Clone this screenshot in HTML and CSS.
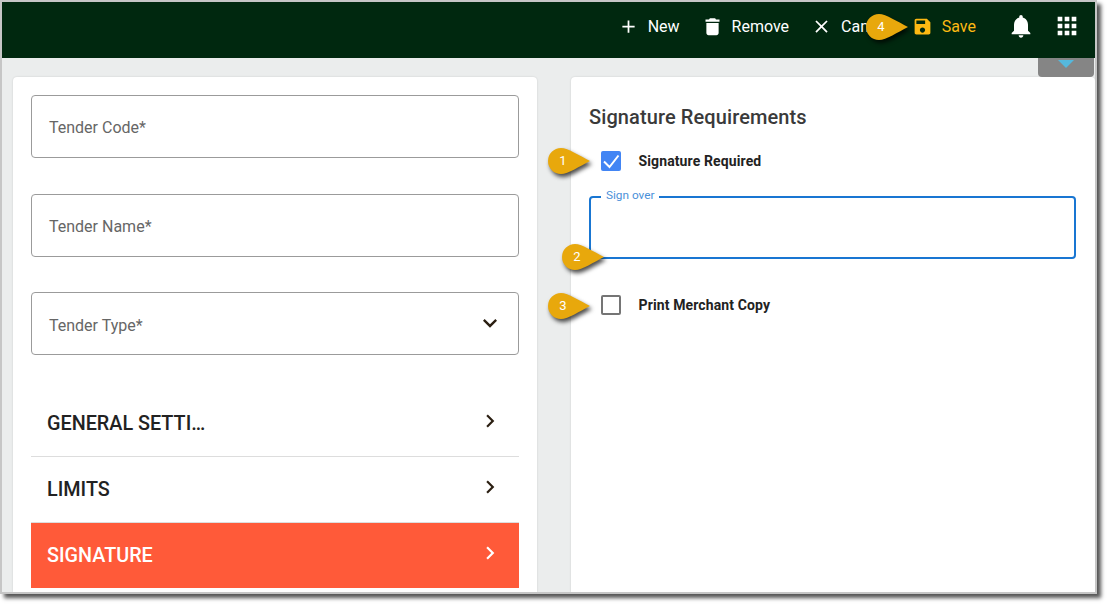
FILE: index.html
```html
<!DOCTYPE html>
<html lang="en">

<head>
    <meta charset="UTF-8">
    <title>Tender Signature Settings</title>
    <link rel="stylesheet" href="styles.css">
</head>

<body>
    <div class="window">
        <header class="topbar">
            <button class="tool">
                <svg class="icon" viewBox="0 0 24 24"><path d="M19 13h-6v6h-2v-6H5v-2h6V5h2v6h6v2z"/></svg>
                New
            </button>
            <button class="tool">
                <svg class="icon" viewBox="0 0 24 24"><path d="M9 2.500h6l1 1.500h4v2.500H4V4h4zM5 8h14v11.500c0 1.400-1.100 2.500-2.500 2.500h-9C6.100 22 5 20.900 5 19.500z"/></svg>
                Remove
            </button>
            <button class="tool">
                <svg class="icon" viewBox="0 0 24 24"><path d="M19 6.410L17.590 5 12 10.590 6.410 5 5 6.410 10.590 12 5 17.590 6.410 19 12 13.410 17.590 19 19 17.590 13.410 12z"/></svg>
                Cancel
            </button>
            <button class="tool tool-save">
                <svg class="icon" viewBox="0 0 24 24"><path d="M17 3H5c-1.110 0-2 .9-2 2v14c0 1.100.89 2 2 2h14c1.100 0 2-.9 2-2V7l-4-4zm-5 16c-1.660 0-3-1.340-3-3s1.340-3 3-3 3 1.340 3 3-1.340 3-3 3zm3-10H5V5h10v4z"/></svg>
                Save
            </button>
            <button class="tool">
                <svg class="icon icon-big" viewBox="0 0 24 24"><path d="M12 22c1.100 0 2-.9 2-2h-4c0 1.100.9 2 2 2zm6-6v-5c0-3.070-1.630-5.640-4.500-6.320V4c0-.83-.67-1.500-1.500-1.500s-1.500.67-1.500 1.500v.68C7.640 5.360 6 7.920 6 11v5l-2 2v1h16v-1l-2-2z"/></svg>
            </button>
            <button class="tool">
                <svg class="icon icon-big" viewBox="0 0 24 24"><path d="M4 8h4V4H4v4zm6 12h4v-4h-4v4zm-6 0h4v-4H4v4zm0-6h4v-4H4v4zm6 0h4v-4h-4v4zm6-10v4h4V4h-4zm-6 4h4V4h-4v4zm6 6h4v-4h-4v4zm0 6h4v-4h-4v4z"/></svg>
            </button>
        </header>

        <main class="content">
            <section class="panel">
                <div class="field">Tender Code*</div>
                <div class="field">Tender Name*</div>
                <div class="field field-select">
                    Tender Type*
                    <svg class="chevron" viewBox="0 0 24 24"><path d="M16.590 8.590L12 13.170 7.410 8.590 6 10l6 6 6-6z"/></svg>
                </div>

                <nav class="menu">
                    <a class="menu-item">
                        <span>GENERAL SETTI…</span>
                        <svg class="chevron" viewBox="0 0 24 24"><path d="M8.590 16.590L13.170 12 8.590 7.410 10 6l6 6-6 6z"/></svg>
                    </a>
                    <a class="menu-item">
                        <span>LIMITS</span>
                        <svg class="chevron" viewBox="0 0 24 24"><path d="M8.590 16.590L13.170 12 8.590 7.410 10 6l6 6-6 6z"/></svg>
                    </a>
                    <a class="menu-item menu-active">
                        <span>SIGNATURE</span>
                        <svg class="chevron" viewBox="0 0 24 24"><path d="M8.590 16.590L13.170 12 8.590 7.410 10 6l6 6-6 6z"/></svg>
                    </a>
                </nav>
            </section>

            <section class="panel">
                <h2>Signature Requirements</h2>
                <div class="check-row">
                    <span class="box box-on">
                        <svg viewBox="0 0 20 20"><path d="M3 10.500l5.500 5.500 9-11.500" fill="none" stroke="#fff" stroke-width="2"/></svg>
                    </span>
                    <span class="check-label">Signature Required</span>
                </div>
                <fieldset class="sign-over">
                    <legend>Sign over</legend>
                </fieldset>
                <div class="check-row">
                    <span class="box"></span>
                    <span class="check-label">Print Merchant Copy</span>
                </div>
            </section>
        </main>

        <div class="handle"><span class="handle-arrow"></span></div>

        <div class="callout callout-1">
            <svg viewBox="0 0 44 30"><path d="M14 1C21 1 33 9 43 14C33 19 21 27 14 27A13 13 0 0 1 14 1z"/></svg>
            <span>1</span>
        </div>
        <div class="callout callout-2">
            <svg viewBox="0 0 44 30"><path d="M14 1C21 1 33 9 43 14C33 19 21 27 14 27A13 13 0 0 1 14 1z"/></svg>
            <span>2</span>
        </div>
        <div class="callout callout-3">
            <svg viewBox="0 0 44 30"><path d="M14 1C21 1 33 9 43 14C33 19 21 27 14 27A13 13 0 0 1 14 1z"/></svg>
            <span>3</span>
        </div>
        <div class="callout callout-4">
            <svg viewBox="0 0 44 30"><path d="M14 1C21 1 33 9 43 14C33 19 21 27 14 27A13 13 0 0 1 14 1z"/></svg>
            <span>4</span>
        </div>
    </div>
</body>

</html>
```

FILE: styles.css
```css
* {
    margin: 0;
    padding: 0;
    box-sizing: border-box;
    font-family: Roboto, Arial, Helvetica, sans-serif;
}

body {
    width: 1111px;
    height: 608px;
    background-color: #fff;
    overflow: hidden;
}

.window {
    position: relative;
    display: flex;
    flex-direction: column;
    width: 1097px;
    height: 594px;
    border: 2px solid #c6c6c6;
    box-shadow: 4px 4px 4px #555;
    overflow: hidden;
}

.topbar {
    display: flex;
    align-items: center;
    justify-content: flex-end;
    flex-shrink: 0;
    height: 56px;
    padding: 0 16px 8px 0;
    gap: 22px;
    background-color: #00280f;
}

.tool {
    display: flex;
    align-items: center;
    gap: 9px;
    border: none;
    background: none;
    color: #fff;
    font-size: 16px;
}

.tool-save {
    margin-right: 11px;
    color: #fdb913;
}

.icon {
    width: 21px;
    height: 21px;
    fill: currentColor;
}

.icon-big {
    width: 28px;
    height: 28px;
    margin: -2px;
}

.content {
    display: flex;
    flex: 1;
    min-height: 0;
    gap: 34px;
    padding: 19px 0 0 11px;
    background-color: #ebeded;
}

.panel {
    width: 524px;
    background-color: #fff;
    border-radius: 4px 4px 0 0;
    padding: 18px;
    box-shadow: 0 0 2px rgba(0, 0, 0, 0.15);
}

.field {
    display: flex;
    align-items: center;
    justify-content: space-between;
    height: 63px;
    margin-bottom: 36px;
    padding: 1px 15px 0 17px;
    border: 1px solid #9b9b9b;
    border-radius: 4px;
    color: #666;
    font-size: 16px;
}

.field-select {
    margin-top: -1px;
    padding-top: 3px;
    padding-right: 14px;
}

.chevron {
    width: 26px;
    height: 26px;
    fill: #2b1f12;
}

.field-select .chevron {
    width: 28px;
    height: 28px;
    margin-top: -5px;
}

.menu-item {
    display: flex;
    align-items: center;
    justify-content: space-between;
    height: 66px;
    padding: 0 16px;
    border-bottom: 1px solid #ddd;
    color: #222;
    font-size: 19.8px;
    font-weight: 500;
}

.menu-item .chevron {
    margin-top: -5px;
}

.menu-active {
    height: 65px;
    border-bottom: none;
    background-color: #ff5a39;
    color: #fff;
}

.menu-active .chevron {
    fill: #fff;
}

h2 {
    color: #3a3a3a;
    font-size: 20px;
    font-weight: 500;
    line-height: 24px;
    letter-spacing: 0.1px;
    margin-top: 10px;
}

.check-row {
    display: flex;
    align-items: center;
    gap: 17.5px;
    height: 20px;
    margin: 22px 0 0 12px;
}

.box {
    width: 20px;
    height: 20px;
    border: 2px solid #757575;
    border-radius: 2px;
}

.box-on {
    border: none;
    background-color: #4285f4;
}

.box svg {
    display: block;
}

.check-label {
    color: #222;
    font-size: 14px;
    font-weight: 700;
    letter-spacing: 0.12px;
}

.sign-over {
    height: 71px;
    width: 487px;
    margin-top: 17px;
    margin-bottom: 36px;
    padding: 0 10px;
    border: 2px solid #1976d2;
    border-radius: 4px;
}

.sign-over + .check-row {
    margin-top: 0;
}

.sign-over legend {
    padding: 0 5px 4px;
    color: #4a90d9;
    font-size: 11.8px;
}

.handle {
    position: absolute;
    top: 56px;
    right: 1px;
    width: 56px;
    height: 19px;
    background-color: #858585;
    border-radius: 0 0 4px 4px;
    display: flex;
    justify-content: center;
}

.handle-arrow {
    width: 0;
    height: 0;
    margin-top: 2px;
    border-left: 8px solid transparent;
    border-right: 8px solid transparent;
    border-top: 8px solid #55b8dc;
}

.callout {
    position: absolute;
    width: 44px;
    height: 30px;
}

.callout svg {
    display: block;
    width: 44px;
    height: 30px;
    fill: #e8a80c;
    filter: drop-shadow(2px 3px 2px rgba(0, 0, 0, 0.7));
}

.callout span {
    position: absolute;
    top: 0;
    left: 0;
    width: 32px;
    line-height: 28px;
    text-align: center;
    color: #fff;
    font-size: 13px;
}

.callout-1 {
    top: 145px;
    left: 545px;
}

.callout-2 {
    top: 241px;
    left: 559px;
}

.callout-3 {
    top: 290px;
    left: 545px;
}

.callout-4 {
    top: 11px;
    left: 863px;
}
```
